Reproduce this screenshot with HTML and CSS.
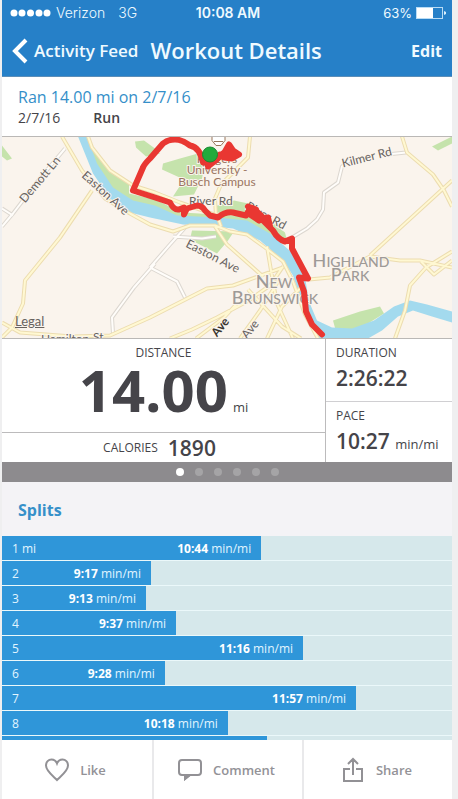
FILE: index.html
```html
<!DOCTYPE html>
<html lang="en">
<head>
<meta charset="utf-8">
<meta name="viewport" content="width=device-width, initial-scale=1">
<title>Workout Details</title>
<link rel="stylesheet" href="styles.css">
</head>
<body>
<div class="app">
  <header class="top">
    <div class="status">
      <div class="carrier">
        <svg class="signal" viewBox="0 0 41 8"><circle cx="4" cy="4" r="3.5"/><circle cx="12" cy="4" r="3.5"/><circle cx="20.5" cy="4" r="3.5"/><circle cx="29" cy="4" r="3.5"/><circle cx="37" cy="4" r="3.5"/></svg>
        <span>Verizon</span><span class="network">3G</span>
      </div>
      <time class="clock">10:08 AM</time>
      <div class="power">
        <span>63%</span>
        <svg class="battery" viewBox="0 0 30 12"><rect x=".5" y=".5" width="26" height="11" fill="none" stroke="#b9dcf5"/><rect x="1" y="1" width="16" height="10" fill="#fff"/><path d="M28 4v4l2-1V5z" fill="#d9eefb"/></svg>
      </div>
    </div>
    <nav class="nav">
      <a class="back" href="#"><svg class="chevron" viewBox="0 0 16 26"><path d="M14 2 3 13l11 11"/></svg><span>Activity Feed</span></a>
      <h1 class="title">Workout Details</h1>
      <button class="edit" type="button">Edit</button>
    </nav>
  </header>

  <section class="summary">
    <h2 class="headline">Ran 14.00 mi on 2/7/16</h2>
    <p class="meta"><span>2/7/16</span><strong>Run</strong></p>
  </section>

  <div class="map">
    <svg class="map-art" viewBox="0 0 450 202" preserveAspectRatio="xMidYMid slice">
      <rect width="450" height="202" fill="#faf4ed"/>
      <g fill="#c5e3ac">
        <path d="M0 9 10 22 5 24 0 20zM133 5 142 4 153 12 158 17 144 20 134 11zM86 0 88 10 108 34 127 46 127 57 153 63 180 76 250 80 268 84 283 96 286 108 262 96 235 86 180 83 150 78 128 70 108 58 92 30z"/>
        <path d="M161 27 178 22 196 17 203 26 200 42 192 58 171 60 182 43 160 33zM212 70 232 64 251 68 250 77 212 76zM190 94 232 95 226 104 215 117 188 103zM430 10 450 0V7L436 14zM331 184 358 175 378 170 382 177 358 192 334 195z"/>
      </g>
      <g fill="#a3daee">
        <path d="M76 0H85L95 27 111 51 131 64 153 69 175 79 215 81 245 84 268 97 291 117 303 141 307 165 315 184 330 191 350 192 372 184 392 170 408 164 425 168 450 175V186L430 180 411 174 396 180 380 194 366 202H318L306 186 296 155 291 139 281 124 258 104 231 92 211 90 181 88 148 81 128 76 108 62 91 37z"/>
      </g>
      <g class="road-edge minor">
        <path id="minor-roads" d="M63 12 37 43 11 77 0 90M0 72 11 79M153 127 132 151 110 181 111 197M148 131 168 108 185 89M148 131 175 145 183 161M290 101 305 92 315 83 321 73 322 56 336 46 340 30 350 22M385 18 404 16M171 100 200 102 214 100"/>
      </g>
      <g class="road minor"><use href="#minor-roads"/></g>
      <g class="road-edge major">
        <path id="major-roads" d="M60 0 80 34 103 62 128 77 148 88 171 95 188 89 213 89 228 95 245 98 263 111 281 125 291 145 303 178 316 202M86 0 90 11 108 34 131 49 153 56 178 66 215 79 219 90M248 0 246 21 219 48 213 62 214 80M90 54 58 101 23 144 21 167 10 191 0 201M0 186 18 196 70 200 108 199 148 181 205 152 231 149 281 131M168 202 190 193 215 181 245 165 268 149 281 130M213 90 225 108 261 140M400 0 405 16 431 38 442 54 450 70M450 44 368 119M307 143 328 141 368 120 398 124 418 124 450 131M450 115 424 131 408 149 403 174 393 202M419 125 432 138 450 124M238 202 258 174 278 142M265 110 269 134 275 167 291 202M265 202 280 170 300 150M246 153 280 190 299 202M194 202 222 181 235 167"/>
      </g>
      <g class="road major"><use href="#major-roads"/></g>

      <g class="labels">
        <text class="street" transform="translate(23 67) rotate(-50)">Demott Ln</text>
        <text class="street" transform="translate(79 40) rotate(42)">Easton Ave</text>
        <text class="street" transform="translate(183 110) rotate(27)">Easton Ave</text>
        <text class="street" x="187" y="68">River Rd</text>
        <text class="street" transform="translate(243 72) rotate(29)">River Rd</text>
        <text class="street" transform="translate(341 31) rotate(-14)">Kilmer Rd</text>
        <text class="street dark" transform="translate(215 201) rotate(-51)">Ave</text>
        <text class="street" transform="translate(245 203) rotate(-51)">Ave</text>
        <text class="street" x="39" y="206">Hamilton</text>
        <text class="street" x="91" y="204">St</text>
        <text class="campus" x="215" y="26">Rutgers</text>
        <text class="campus" x="215" y="37">University -</text>
        <text class="campus" x="215" y="49">Busch Campus</text>
        <text class="city" x="272" y="151">N<tspan class="cap">EW</tspan></text>
        <text class="city" x="273" y="167">B<tspan class="cap">RUNSWICK</tspan></text>
        <text class="city" x="349" y="130">H<tspan class="cap">IGHLAND</tspan></text>
        <text class="city" x="348" y="144">P<tspan class="cap">ARK</tspan></text>
      </g>

      <g fill="#fff" stroke="#99765c"><path d="M210 0v4l4 5h5l4-5V0z"/><path d="M212 5h9"/></g>
      <path class="route" d="M231 14 237 18 230 22 222 21 228 16 234 19 218 18M208 19 204 23 206 30 215 23 223 15 227 8 231 14M208 26 201 26Q198 11 188 9 180 3 173 3 166 3 161 7L148 22Q142 28 141 31L131 54 153 61 168 66Q172 74 177 73L182 71 182 78 185 72 195 69Q200 69 203 74L208 79 216 81Q223 75 231 76L244 79 248 72 246 70 254 73 248 78 257 84 254 74 262 82 266 81 268 90 262 85 271 94Q276 103 283 105L290 102 290 112 298 127 306 142 297 141 302 155 304 175 310 188 320 198"/>
      <circle cx="208" cy="18" r="7.5" fill="#22aa3c" stroke="#198b31"/>
    </svg>
    <a class="legal" href="#">Legal</a>
  </div>

  <section class="stats">
    <div class="stats-main">
      <div class="distance">
        <h3 class="label">DISTANCE</h3>
        <p class="distance-value"><span class="huge">14.00</span><span class="unit">mi</span></p>
      </div>
      <div class="calories"><h3 class="label">CALORIES</h3><span class="value">1890</span></div>
    </div>
    <div class="stats-side">
      <div class="stat"><h3 class="label">DURATION</h3><p class="value">2:26:22</p></div>
      <div class="stat"><h3 class="label">PACE</h3><p class="value">10:27 <span class="unit">min/mi</span></p></div>
    </div>
  </section>

  <div class="pager"><span class="dot current"></span><span class="dot"></span><span class="dot"></span><span class="dot"></span><span class="dot"></span><span class="dot"></span></div>

  <section class="splits">
    <h2 class="splits-title">Splits</h2>
    <ol class="split-list">
      <li class="split"><div class="bar" style="width:57.6%"><span>1 mi</span><span><b>10:44</b> min/mi</span></div></li>
      <li class="split"><div class="bar" style="width:33.1%"><span>2</span><span><b>9:17</b> min/mi</span></div></li>
      <li class="split"><div class="bar" style="width:32%"><span>3</span><span><b>9:13</b> min/mi</span></div></li>
      <li class="split"><div class="bar" style="width:38.7%"><span>4</span><span><b>9:37</b> min/mi</span></div></li>
      <li class="split"><div class="bar" style="width:66.9%"><span>5</span><span><b>11:16</b> min/mi</span></div></li>
      <li class="split"><div class="bar" style="width:36.2%"><span>6</span><span><b>9:28</b> min/mi</span></div></li>
      <li class="split"><div class="bar" style="width:78.7%"><span>7</span><span><b>11:57</b> min/mi</span></div></li>
      <li class="split"><div class="bar" style="width:50.2%"><span>8</span><span><b>10:18</b> min/mi</span></div></li>
      <li class="split"><div class="bar" style="width:58.9%"></div></li>
    </ol>
  </section>

  <footer class="actions">
    <button class="action" type="button"><svg class="icon" viewBox="0 0 26 26"><path d="M13 23C9 19 2 14 2 8.5 2 5 4.5 2.5 7.5 2.5c2.500 0 4.5 1.500 5.500 4 1-2.500 3-4 5.500-4 3 0 5.500 2.500 5.500 6C24 14 17 19 13 23z"/></svg>Like</button>
    <button class="action" type="button"><svg class="icon" viewBox="0 0 26 26"><path d="M5 3h16q3 0 3 3v9q0 3-3 3h-8l-5 4v-4H5q-3 0-3-3V6q0-3 3-3z"/><path d="M8 18v4l5-4z" fill="#929195"/></svg>Comment</button>
    <button class="action" type="button"><svg class="icon" viewBox="0 0 26 26"><path d="M10 12H4v12h18V12h-6M13 18V2M8 7l5-5 5 5"/></svg>Share</button>
  </footer>
</div>
</body>
</html>
```

FILE: styles.css
```css
* { box-sizing: border-box; }

body {
  margin: 0;
  background: #efeff0;
  color: #454449;
  font-family: "Open Sans", "Noto Sans", sans-serif;
  font-size: 13px;
}

h1, h2, h3, p, ol { margin: 0; padding: 0; }
a { color: inherit; text-decoration: none; }
button { border: 0; padding: 0; background: none; color: inherit; font: inherit; }
svg { display: block; }

.app {
  display: flex;
  flex-direction: column;
  height: 100vh;
  margin: 0 6px 0 2px;
  background: #fff;
}

.top { background: #2680c8; color: #effaff; border-bottom: 1px solid #5b8eb9; }

.status {
  display: grid;
  grid-template-columns: 1fr auto 1fr;
  align-items: center;
  height: 25px;
  padding: 0 6px 0 8px;
  font-family: Inter, "Liberation Sans", sans-serif;
}
.carrier, .power { display: flex; align-items: center; }
.carrier { gap: 5px; font-size: 14px; font-weight: 300; }
.power { justify-content: flex-end; gap: 4px; }
.network { margin-left: 8px; }
.clock { font-size: 14px; font-weight: 600; }
.signal { width: 41px; height: 8px; fill: #fff; }
.battery { width: 30px; height: 12px; }

.nav { display: flex; align-items: center; height: 51px; padding: 0 10px; }
.back { display: flex; align-items: center; gap: 6px; font-size: 17px; font-weight: 600; white-space: nowrap; }
.chevron { width: 16px; height: 26px; fill: none; stroke: #fff; stroke-width: 4; }
.title { margin: 0 0 2px 12px; font-size: 22px; font-weight: 600; line-height: 28px; white-space: nowrap; }
.edit { margin-left: auto; font-size: 16px; font-weight: 700; }

.summary { padding: 10px 16px 8px; }
.headline { color: #358fc9; font-size: 16px; font-weight: 500; line-height: 21px; }
.meta { display: flex; gap: 33px; font-size: 14px; line-height: 20px; }
.meta strong { font-weight: 600; }

.map { position: relative; border: solid #bab8b6; border-width: 1px 0; }
.map-art { width: 100%; height: 201px; }
.road, .road-edge { fill: none; stroke-linejoin: round; }
.road-edge.minor { stroke: #dcd7d0; stroke-width: 4; }
.road.minor { stroke: #fffdfa; stroke-width: 2; }
.road-edge.major { stroke: #ecdcb0; stroke-width: 4; }
.road.major { stroke: #fff8d2; stroke-width: 2; }
.labels { font-family: Lato, "Open Sans", sans-serif; stroke: #faf4ed; stroke-width: 2; paint-order: stroke; }
.street { fill: #68635f; font-size: 12px; }
.dark { fill: #39342f; font-weight: 700; }
.campus { fill: #9b7461; font-size: 12px; text-anchor: middle; }
.city { fill: #9e9a97; font-size: 18px; font-weight: 500; text-anchor: middle; }
.cap { font-size: 14px; }
.route { fill: none; stroke: #e93732; stroke-width: 6; stroke-linejoin: round; stroke-linecap: round; }
.legal { position: absolute; left: 13px; bottom: 9px; color: #68635f; font-family: Lato, sans-serif; font-size: 13px; line-height: 16px; text-decoration: underline; }

.stats { display: grid; grid-template-columns: 72fr 28fr; height: 123px; }
.stats-main { display: flex; flex-direction: column; border-right: 1px solid #bcbbbc; }
.label { font-size: 12px; font-weight: 400; line-height: 16px; }
.value { font-size: 21px; font-weight: 600; line-height: 26px; white-space: nowrap; }
.distance { height: 94px; padding-top: 6px; border-bottom: 1px solid #bcbbbc; text-align: center; }
.distance-value { display: flex; align-items: baseline; justify-content: center; gap: 5px; line-height: 58px; }
.huge { font-size: 58px; font-weight: 700; }
.unit { font-size: 13px; font-weight: 400; }
.calories { display: flex; flex: 1; align-items: center; justify-content: center; gap: 10px; padding-right: 8px; }
.stats-side { display: grid; grid-template-rows: 1fr 1fr; }
.stat { padding: 6px 0 0 10px; }
.stat + .stat { border-top: 1px solid #d0cfd2; }
.stat .value { margin-top: 4px; }

.pager { display: flex; align-items: center; justify-content: center; gap: 11px; height: 20px; background: #8d8b8e; }
.dot { width: 8px; height: 8px; border-radius: 50%; background: #a5a4a6; }
.current { background: #fff; }

.splits { display: flex; flex: 1; flex-direction: column; min-height: 0; overflow: hidden; background: #f4f3f6; }
.splits-title { flex: none; height: 54px; padding: 16px 16px 0; color: #3690c9; font-size: 16px; font-weight: 700; line-height: 24px; }
.split-list { list-style: none; background: #ebf8fa; }
.split { height: 24px; margin-bottom: 1px; background: #d6e8eb; }
.bar { display: flex; align-items: center; justify-content: space-between; height: 100%; padding: 0 10px; background: #2f96d9; color: #e1f5ff; font-size: 12px; white-space: nowrap; }
.bar b { color: #fff; font-weight: 700; }

.actions { display: grid; flex: none; grid-template-columns: repeat(3, 1fr); height: 59px; background: #fff; }
.action { display: flex; align-items: center; justify-content: center; gap: 10px; padding-right: 4px; color: #939297; font-weight: 600; }
.action + .action { border-left: 2px solid #e9e9eb; }
.icon { width: 26px; height: 26px; fill: none; stroke: #929195; stroke-width: 2; }
```
